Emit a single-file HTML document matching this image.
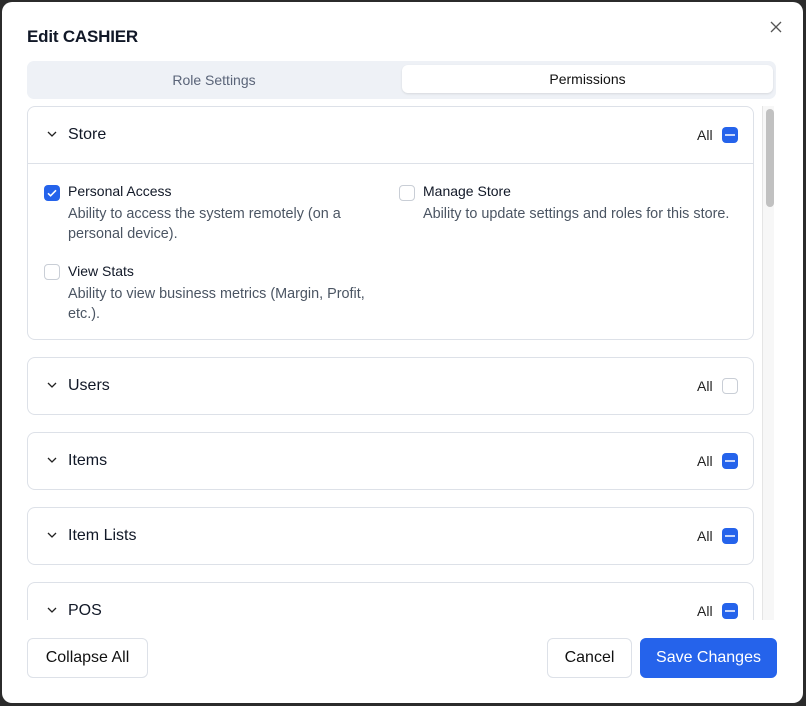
<!DOCTYPE html>
<html><head><style>
*{box-sizing:border-box;margin:0;padding:0}
body{width:806px;height:706px;background:#2b2b2b;font-family:"Liberation Sans",sans-serif;position:relative;overflow:hidden}
.modal{position:absolute;left:2px;top:2px;width:801px;height:701px;background:#fff;border-radius:10px;overflow:hidden}
.abs{position:absolute}
.title{left:25px;top:25px;font-size:17px;font-weight:bold;color:#111827;letter-spacing:-0.2px}
.close{left:768px;top:19px}
.tabs{left:25px;top:59px;width:749px;height:38px;background:#eef1f6;border-radius:7px}
.tab{position:absolute;top:0;height:38px;line-height:38px;text-align:center;font-size:14px}
.t1{left:0;width:374px;color:#5a6478}
.t2{left:375px;top:4px;width:371px;height:28px;line-height:28px;background:#fff;border-radius:6px;color:#111;box-shadow:0 1px 2px rgba(0,0,0,.1)}
.scroll{left:25px;top:104px;width:727px;height:514px;overflow:hidden}
.card{position:absolute;left:0;width:727px;border:1px solid #dde1e8;border-radius:8px;background:#fff}
.hdr{height:56px;position:relative;font-size:16px;color:#111827}
.hdr .ch{position:absolute;left:19px;top:24px}
.hdr .nm{position:absolute;left:40px;top:19px}
.hdr .all{position:absolute;left:669px;top:20px;font-size:14px;color:#222}
.cb{position:absolute;width:16px;height:16px;border-radius:4px}
.ind{background:#2563eb}
.ind:after{content:"";position:absolute;left:3px;top:7px;width:10px;height:2px;background:#c7d7fb}
.emp{border:1px solid #c9ced6;background:#fff}
.chk{background:#2563eb}
.body{border-top:1px solid #dde1e8;position:relative;height:176px}
.pt{position:absolute;font-size:14px;color:#111827}
.pd{position:absolute;font-size:14.4px;color:#4b5563;line-height:20px}
.track{left:760px;top:104px;width:12px;height:514px;background:#f7f7f7;border-left:1px solid #e5e5e5}
.thumb{left:764px;top:107px;width:8px;height:98px;background:#c1c1c1;border-radius:4px}
.btn{position:absolute;top:636px;height:40px;line-height:38px;border:1px solid #dde1e8;border-radius:6px;font-size:16px;color:#111;text-align:center;background:#fff}
</style></head><body>
<div class="modal">
<div class="abs title">Edit CASHIER</div>
<svg class="abs close" width="12" height="12"><path d="M1 1L11 11M11 1L1 11" stroke="#555" stroke-width="1.3"/></svg>
<div class="abs tabs"><div class="tab t1">Role Settings</div><div class="tab t2">Permissions</div></div>
<div class="abs scroll">
 <div class="card" style="top:0;height:234px">
  <div class="hdr"><svg class="ch" width="10" height="6"><path d="M1 1l4 4 4-4" stroke="#222" stroke-width="1.3" fill="none"/></svg><span class="nm">Store</span><span class="all">All</span><span class="cb ind" style="left:694px;top:20px"></span></div>
  <div class="body">
   <span class="cb chk" style="left:16px;top:21px"><svg width="16" height="16"><path d="M4 8.3l2.6 2.5L12 5.3" stroke="#fff" stroke-width="1.6" fill="none"/></svg></span>
   <div class="pt" style="left:40px;top:19px">Personal Access</div>
   <div class="pd" style="left:40px;top:40px">Ability to access the system remotely (on a<br>personal device).</div>
   <span class="cb emp" style="left:16px;top:100px"></span>
   <div class="pt" style="left:40px;top:99px">View Stats</div>
   <div class="pd" style="left:40px;top:120px">Ability to view business metrics (Margin, Profit,<br>etc.).</div>
   <span class="cb emp" style="left:371px;top:21px"></span>
   <div class="pt" style="left:395px;top:19px">Manage Store</div>
   <div class="pd" style="left:395px;top:40px">Ability to update settings and roles for this store.</div>
  </div>
 </div>
 <div class="card" style="top:251px;height:58px"><div class="hdr"><svg class="ch" width="10" height="6"><path d="M1 1l4 4 4-4" stroke="#222" stroke-width="1.3" fill="none"/></svg><span class="nm">Users</span><span class="all">All</span><span class="cb emp" style="left:694px;top:20px"></span></div></div>
 <div class="card" style="top:326px;height:58px"><div class="hdr"><svg class="ch" width="10" height="6"><path d="M1 1l4 4 4-4" stroke="#222" stroke-width="1.3" fill="none"/></svg><span class="nm">Items</span><span class="all">All</span><span class="cb ind" style="left:694px;top:20px"></span></div></div>
 <div class="card" style="top:401px;height:58px"><div class="hdr"><svg class="ch" width="10" height="6"><path d="M1 1l4 4 4-4" stroke="#222" stroke-width="1.3" fill="none"/></svg><span class="nm">Item Lists</span><span class="all">All</span><span class="cb ind" style="left:694px;top:20px"></span></div></div>
 <div class="card" style="top:476px;height:58px"><div class="hdr"><svg class="ch" width="10" height="6"><path d="M1 1l4 4 4-4" stroke="#222" stroke-width="1.3" fill="none"/></svg><span class="nm">POS</span><span class="all">All</span><span class="cb ind" style="left:694px;top:20px"></span></div></div>
</div>
<div class="abs track"></div>
<div class="abs thumb"></div>
<div class="btn" style="left:25px;width:121px">Collapse All</div>
<div class="btn" style="left:545px;width:85px">Cancel</div>
<div class="btn" style="left:638px;width:137px;background:#2563eb;border-color:#2563eb;color:#fff">Save Changes</div>
</div>
</body></html>
